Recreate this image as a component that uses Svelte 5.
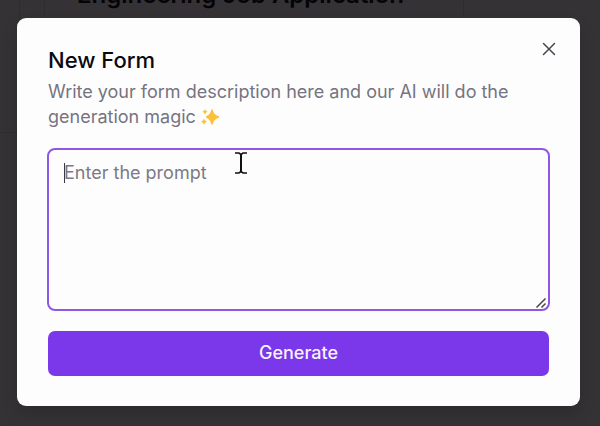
<script>
  let prompt = $state('');
</script>

<div class="page">
  <main class="behind" aria-hidden="true">
    <div class="strip"></div>
    <article class="card">
      <h1>Engineering Job Application</h1>
    </article>
  </main>

  <div class="overlay">
    <div class="dialog" role="dialog" aria-modal="true" aria-labelledby="title" aria-describedby="description">
      <button class="close" type="button" aria-label="Close">
        <svg viewBox="0 0 14 14" width="14" height="14" aria-hidden="true">
          <path d="M1.5 1.5 12.5 12.5M12.5 1.5 1.5 12.5" fill="none" stroke="#47474d" stroke-width="1.5" stroke-linecap="round" />
        </svg>
      </button>

      <header>
        <h2 id="title">New Form</h2>
        <p id="description">
          Write your form description here and our AI will do the generation magic
          <svg class="sparkles" viewBox="0 0 18 18" width="18" height="18" role="img" aria-label="sparkles">
            <g fill="#fcc13b">
              <path d="M11 2Q12.3 7.6 17.5 9Q12.3 10.4 11 16Q9.7 10.4 5.5 9Q9.7 7.6 11 2Z" stroke="#fcc13b" stroke-width="1.4" stroke-linejoin="round" />
              <path d="M4 1Q4.6 3.1 6.6 3.7Q4.6 4.3 4 6.4Q3.4 4.3 1.4 3.7Q3.4 3.1 4 1Z" />
              <path d="M3 10.6Q3.7 13 6 13.7Q3.7 14.4 3 16.8Q2.3 14.4 0 13.7Q2.3 13 3 10.6Z" />
            </g>
          </svg>
        </p>
      </header>

      <form>
        <div class="field">
          <textarea aria-label="Form description" placeholder="Enter the prompt" bind:value={prompt}></textarea>
          <span class="caret"></span>
          <svg class="grip" viewBox="0 0 12 12" width="12" height="12" aria-hidden="true">
            <path d="M1.5 10.5 10.5 1.5M6.5 10.5 10.5 6.5" fill="none" stroke="#45454a" stroke-width="1.5" />
          </svg>
          <svg class="pointer" viewBox="0 0 14 24" width="14" height="24" aria-hidden="true">
            <path d="M1 2H5L7 3.4L9 2H13M1 22H5L7 20.6L9 22H13" fill="none" stroke="#111" stroke-width="1.6" />
            <path d="M7 3V21" stroke="#111" stroke-width="2" />
          </svg>
        </div>
        <button class="generate" type="button">Generate</button>
      </form>
    </div>
  </div>
</div>

<style>
  :global(body) {
    background: #343235;
  }

  .page {
    position: relative;
    display: flex;
    min-height: 100vh;
    overflow: hidden;
    font-family: Inter, "Liberation Sans", sans-serif;
  }

  .behind {
    position: absolute;
    inset: 0;
    display: flex;
    gap: 24px;
  }

  .strip {
    box-sizing: border-box;
    width: 20px;
    height: 133px;
    border: solid #2f2d30;
    border-width: 0 1px 1px 0;
  }

  .card {
    box-sizing: border-box;
    width: 420px;
    height: 133px;
    padding-left: 32px;
    border: solid #2f2d30;
    border-width: 0 1px 1px;
  }

  h1 {
    margin: -19px 0 0;
    color: #040305;
    font-size: 24px;
    font-weight: 600;
    line-height: 28px;
    white-space: nowrap;
  }

  .overlay {
    position: relative;
    box-sizing: border-box;
    display: flex;
    flex: 1;
    align-items: flex-start;
    justify-content: center;
    padding: 18px 20px 20px 17px;
  }

  .dialog {
    position: relative;
    box-sizing: border-box;
    flex: 1;
    padding: 28px 31px 30px;
    border-radius: 9px;
    background: #fefdfe;
    box-shadow: 0 8px 16px rgba(0, 0, 0, 0.15);
  }

  .close {
    position: absolute;
    top: 20px;
    right: 20px;
    display: flex;
    padding: 4px;
    border: 0;
    background: none;
  }

  h2 {
    margin: 0;
    color: #0a0a0f;
    font-size: 22px;
    font-weight: 500;
    line-height: 28px;
  }

  p {
    margin: 5px 0 0;
    color: #757480;
    font-size: 18px;
    line-height: 25px;
  }

  .sparkles {
    vertical-align: -3px;
  }

  form {
    display: flex;
    flex-direction: column;
    gap: 20px;
    margin-top: 20px;
  }

  .field {
    position: relative;
    display: flex;
    margin: -1px -1px 0;
  }

  textarea {
    box-sizing: border-box;
    width: 100%;
    height: 163px;
    padding: 11px 15px;
    border: 2px solid #8f57e4;
    border-radius: 8px;
    outline: 0;
    background: transparent;
    color: #0a0a0f;
    font: 18px/24px Inter, "Liberation Sans", sans-serif;
    resize: none;
  }

  textarea::placeholder {
    color: #7b7a84;
    opacity: 1;
  }

  .caret {
    position: absolute;
    top: 15px;
    left: 17px;
    width: 1px;
    height: 20px;
    background: #3c3b42;
  }

  .grip {
    position: absolute;
    right: 3px;
    bottom: 2px;
  }

  .pointer {
    position: absolute;
    top: 3px;
    left: 187px;
  }

  .generate {
    height: 45px;
    padding: 0 16px 2px;
    border: 0;
    border-radius: 7px;
    background: #7b37ea;
    color: #f7f2fe;
    font: 500 18px/24px Inter, "Liberation Sans", sans-serif;
  }
</style>
